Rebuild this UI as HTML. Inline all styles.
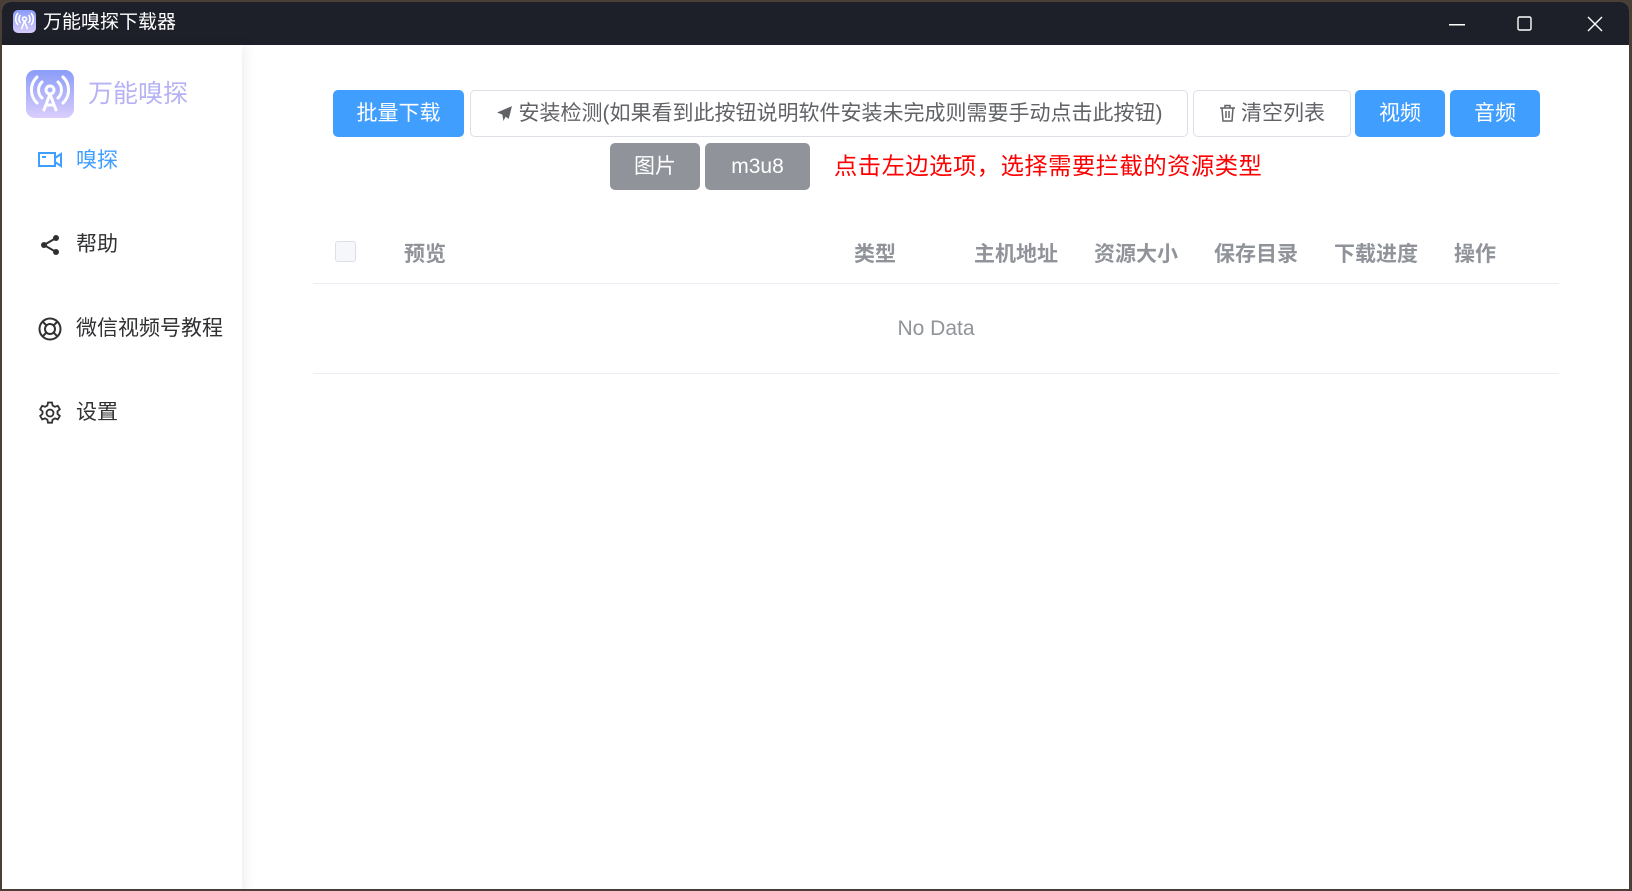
<!DOCTYPE html>
<html><head><meta charset="utf-8"><style>
*{margin:0;padding:0;box-sizing:border-box}
body{width:1632px;height:891px;overflow:hidden;background:#4a3f36;font-family:"Liberation Sans","Noto Sans CJK SC",sans-serif;position:relative}
.win{position:absolute;left:2px;top:2px;width:1627px;height:887px;background:#fff;border-radius:8px 8px 0 0;overflow:hidden}
.title{position:absolute;left:0;top:0;width:100%;height:43px;background:#1e2029;color:#fff}
.title .ic{position:absolute;left:11px;top:8px;width:23px;height:23px;border-radius:5px;background:linear-gradient(#8a9cf8,#d6cbfb)}
.title .t{position:absolute;left:41px;top:9px;font-size:19px;line-height:24px}
.side{position:absolute;left:0;top:43px;width:240px;height:850px;background:#fff;box-shadow:2px 0 12px rgba(0,0,0,.08)}
.logo{position:absolute;left:24px;top:25px;width:48px;height:48px;border-radius:9px;background:linear-gradient(#8a9cf8,#d9cdfc)}
.ltxt{position:absolute;left:86px;top:34px;font-size:25px;color:#b6b2f4;line-height:30px}
.nav{position:absolute;left:74px;font-size:21px;color:#303133;line-height:26px}
.nav svg{position:absolute;left:-38px;top:1px}
.btn{position:absolute;height:47px;border-radius:5px;font-size:21px;line-height:47px;text-align:center;color:#fff}
.b{background:#409eff}.g{background:#909399}
.w{background:#fff;border:1px solid #dcdfe6;color:#606266;line-height:45px}
.th{position:absolute;top:240px;font-size:21px;font-weight:bold;color:#909399;line-height:26px}
.line{position:absolute;left:311px;width:1246px;height:1px;background:#ebeef5}
</style></head><body>
<div class="win">
<div class="title"><div class="ic"><svg width="23" height="23" viewBox="0 0 23 23" fill="none" stroke="#fff" stroke-width="1.6"><circle cx="11.5" cy="9" r="2"/><path d="M7.5 5a6 6 0 0 0 0 8M15.5 5a6 6 0 0 1 0 8M5 3a9 9 0 0 0 0 12M18 3a9 9 0 0 1 0 12M11.5 11l-3 8M11.5 11l3 8"/></svg></div><div class="t">万能嗅探下载器</div>
<svg style="position:absolute;left:1447px;top:22px" width="16" height="2"><rect width="16" height="1.5" fill="#fff"/></svg>
<svg style="position:absolute;left:1515px;top:14px" width="15" height="15"><rect x="1" y="1" width="13" height="13" rx="1.5" fill="none" stroke="#fff" stroke-width="1.4"/></svg>
<svg style="position:absolute;left:1585px;top:14px" width="16" height="16"><path d="M1 1L15 15M15 1L1 15" stroke="#fff" stroke-width="1.4"/></svg>
</div>
<div class="side">
<div class="logo"><svg width="48" height="48" viewBox="0 0 48 48" fill="none" stroke="#fff" stroke-width="3" stroke-linecap="round"><circle cx="24" cy="20" r="4"/><path d="M16 12a11 11 0 0 0 0 16M32 12a11 11 0 0 1 0 16M11 7a18 18 0 0 0 0 26M37 7a18 18 0 0 1 0 26M24 24l-6 16M24 24l6 16M20 35h8"/></svg></div>
<div class="ltxt">万能嗅探</div>
<div class="nav" style="top:103px;color:#409eff"><svg width="26" height="22" viewBox="0 0 26 22" fill="none" stroke="#409eff" stroke-width="2"><rect x="1" y="4" width="16" height="13"/><path d="M4 8h4M17 9l6-4v12l-6-4"/></svg>嗅探</div>
<div class="nav" style="top:187px"><svg width="24" height="24" viewBox="0 0 24 24" fill="#303133"><circle cx="18" cy="5" r="3"/><circle cx="6" cy="12" r="3"/><circle cx="18" cy="19" r="3"/><path d="M6 12L18 5M6 12l12 7" stroke="#303133" stroke-width="2"/></svg>帮助</div>
<div class="nav" style="top:271px"><svg width="24" height="24" viewBox="0 0 24 24" fill="none" stroke="#303133" stroke-width="2"><circle cx="12" cy="12" r="10.5"/><circle cx="12" cy="12" r="5"/><path d="M5 5l3.5 3.5M19 5l-3.5 3.5M5 19l3.5-3.5M19 19l-3.5-3.5"/></svg>微信视频号教程</div>
<div class="nav" style="top:355px"><svg width="24" height="24" viewBox="0 0 24 24" fill="none" stroke="#303133" stroke-width="1.8"><circle cx="12" cy="12" r="3.5"/><path d="M10 1.5h4l.6 3 2.3 1.3 2.9-1 2 3.5-2.3 2v2.6l2.3 2-2 3.5-2.9-1-2.3 1.3-.6 3h-4l-.6-3-2.3-1.3-2.9 1-2-3.5 2.3-2v-2.6l-2.3-2 2-3.5 2.9 1L9.4 4.5z"/></svg>设置</div>
</div>
<div class="btn b" style="left:331px;top:88px;width:131px">批量下载</div>
<div class="btn w" style="left:468px;top:88px;width:718px"><svg style="vertical-align:-2px;margin-right:6px" width="17" height="17" viewBox="0 0 16 16"><path d="M15 1L1 7l5 2 1 6 2-4 3 2z" fill="#606266"/></svg>安装检测(如果看到此按钮说明软件安装未完成则需要手动点击此按钮)</div>
<div class="btn w" style="left:1191px;top:88px;width:158px"><svg style="vertical-align:-2px;margin-right:5px" width="17" height="18" viewBox="0 0 17 18" fill="none" stroke="#606266" stroke-width="1.5"><path d="M1 4h15M6 4V1.5h5V4M3 4l1 13h9l1-13M7 7v7M10 7v7"/></svg>清空列表</div>
<div class="btn b" style="left:1353px;top:88px;width:90px">视频</div>
<div class="btn b" style="left:1448px;top:88px;width:90px">音频</div>
<div class="btn g" style="left:608px;top:141px;width:90px">图片</div>
<div class="btn g" style="left:703px;top:141px;width:105px">m3u8</div>
<div style="position:absolute;left:832px;top:150px;font-size:23.3px;letter-spacing:0.5px;color:#f00;line-height:28px">点击左边选项，选择需要拦截的资源类型</div>
<div style="position:absolute;left:333px;top:239px;width:21px;height:21px;border:1px solid #dcdfe6;border-radius:3px;background:#f5f7fa"></div>
<div class="th" style="left:402px">预览</div>
<div class="th" style="left:852px">类型</div>
<div class="th" style="left:972px">主机地址</div>
<div class="th" style="left:1092px">资源大小</div>
<div class="th" style="left:1212px">保存目录</div>
<div class="th" style="left:1332px">下载进度</div>
<div class="th" style="left:1452px">操作</div>
<div class="line" style="top:281px"></div>
<div style="position:absolute;left:311px;width:1246px;top:315px;text-align:center;font-size:21px;color:#909399">No Data</div>
<div class="line" style="top:371px"></div>
</div>
</body></html>
